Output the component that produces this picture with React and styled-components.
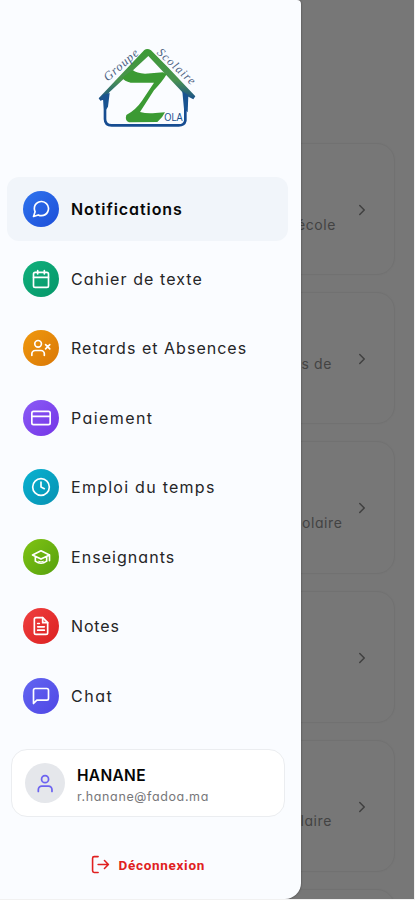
import React from 'react';
import styled, { createGlobalStyle } from 'styled-components';
import { ChevronRight } from 'lucide-react';
import {
  FiCalendar,
  FiClock,
  FiCreditCard,
  FiMessageCircle,
  FiMessageSquare,
} from 'react-icons/fi';

const GlobalStyle = createGlobalStyle`
  * {
    box-sizing: border-box;
  }

  body {
    background: #f1f1f1;
    font-family: Inter, 'Liberation Sans', sans-serif;
    font-feature-settings: 'cv11' 1;
    margin: 0;
    overflow: hidden;
  }
`;

const Screen = styled.div`
  background: #777;
  height: 899px;
  overflow: hidden;
  position: relative;
  width: 414px;
`;

const Feed = styled.main`
  display: flex;
  flex-direction: column;
  gap: 17px;
  padding: 143px 19.5px 0 20px;
`;

const FeedCard = styled.article`
  align-items: center;
  border: 1px solid #717171;
  border-radius: 18px;
  box-shadow: 0 0 2px rgba(0, 0, 0, 0.04);
  display: flex;
  flex: none;
  height: 132.2px;
  justify-content: flex-end;
  padding: 2px 22.5px 0 0;
`;

const FeedText = styled.span`
  color: #434343;
  font-size: 14px;
  letter-spacing: 0.6px;
  line-height: 20px;
  padding-top: ${({ $drop }) => $drop * 2}px;
  text-align: right;
  white-space: nowrap;
`;

const FeedChevron = styled(ChevronRight)`
  color: #404040;
  flex: none;
  height: 18px;
  margin-left: ${({ $gap }) => $gap}px;
  width: 18px;
`;

const Drawer = styled.aside`
  background: #fafcff;
  border-radius: 0 4px 16px 0;
  box-shadow: 0 0 2px rgba(0, 0, 0, 0.5);
  display: flex;
  flex-direction: column;
  height: 899px;
  left: 0;
  position: absolute;
  top: 0;
  width: 301px;
`;

const Logo = styled.svg`
  flex: none;
  height: 105px;
  margin: 35px 0 0 85px;
  width: 130px;
`;

const Menu = styled.nav`
  display: flex;
  flex-direction: column;
  gap: 5.5px;
  margin-top: 37px;
  padding: 0 13px 0 7px;
`;

const MenuItem = styled.a`
  align-items: center;
  background: ${({ $active }) => ($active ? '#f1f5fa' : 'transparent')};
  border-radius: 12px;
  display: flex;
  gap: 12px;
  height: 64px;
  padding-left: 16px;
`;

const MenuIcon = styled.span`
  align-items: center;
  background: ${({ $from, $to }) => `linear-gradient(135deg, ${$from}, ${$to})`};
  border-radius: 50%;
  color: #fff;
  display: flex;
  flex: none;
  height: 36px;
  justify-content: center;
  width: 36px;

  svg {
    height: 20px;
    width: 20px;
  }
`;

const MenuLabel = styled.span`
  color: ${({ $active }) => ($active ? '#080808' : '#252527')};
  font-size: 16px;
  font-weight: ${({ $active }) => ($active ? 600 : 400)};
  letter-spacing: ${({ $tracking }) => $tracking}px;
  white-space: nowrap;
`;

const Profile = styled.section`
  align-items: center;
  background: #fff;
  border: 1px solid #ebedf0;
  border-radius: 16px;
  display: flex;
  gap: 12px;
  height: 68px;
  margin: 21.5px 16px 0 11px;
  padding-left: 13px;
`;

const Avatar = styled.span`
  align-items: center;
  background: #e5e7eb;
  border-radius: 50%;
  color: #6c63f0;
  display: flex;
  height: 40px;
  justify-content: center;
  width: 40px;

  svg {
    height: 21px;
    width: 21px;
  }
`;

const ProfileText = styled.div`
  display: flex;
  flex-direction: column;
  padding-top: 4px;
`;

const ProfileName = styled.strong`
  color: #050505;
  font-size: 15.5px;
  font-weight: 600;
  letter-spacing: 0.3px;
  line-height: 22px;
`;

const ProfileMail = styled.span`
  color: #77777a;
  font-size: 12.5px;
  letter-spacing: 0.63px;
  line-height: 19px;
`;

const Logout = styled.button`
  align-items: center;
  background: none;
  border: 0;
  color: #e02020;
  display: flex;
  font-family: Roboto, sans-serif;
  font-size: 13.5px;
  font-weight: 700;
  gap: 9px;
  height: 24px;
  letter-spacing: 0.7px;
  margin-top: 35.5px;
  padding: 0 0 0 90.5px;

  svg {
    height: 19px;
    width: 19px;
  }
`;

const Stroke = ({ children }) => (
  <svg
    viewBox="0 0 24 24"
    fill="none"
    stroke="currentColor"
    strokeWidth="2"
    strokeLinecap="round"
    strokeLinejoin="round"
  >
    {children}
  </svg>
);

const PersonIcon = () => (
  <Stroke>
    <circle cx="11.5" cy="7" r="4" />
    <path d="M3.8 21v-2a4 4 0 0 1 4-4h7.6a4 4 0 0 1 4 4v2" />
  </Stroke>
);

const AbsenceIcon = () => (
  <Stroke>
    <circle cx="8.5" cy="7" r="4" />
    <path d="M1 21v-2a4 4 0 0 1 4-4h7a4 4 0 0 1 4 4v2M17.5 8l5 5m0-5-5 5" />
  </Stroke>
);

const NoteIcon = () => (
  <Stroke>
    <path d="M14 2H6a2 2 0 0 0-2 2v16a2 2 0 0 0 2 2h12a2 2 0 0 0 2-2V8z" />
    <path d="M14 2v6h6M8 9h2M8 13h8M8 17h8" />
  </Stroke>
);

const TeacherIcon = () => (
  <Stroke>
    <path d="M12 4.5 1.8 9.5 12 14.5 22.2 9.5zM5.2 11.5v5.5q6.8 5 13.6 0v-5.5M22.2 9.5v7" />
    <path d="M9 17.2q3 1.4 6 0" strokeWidth="1.2" />
  </Stroke>
);

const LogoutIcon = () => (
  <Stroke>
    <path d="M9 22H4a2 2 0 0 1-2-2V4a2 2 0 0 1 2-2h5M9 12h13M17 7l5 5-5 5" />
  </Stroke>
);

const SchoolLogo = () => (
  <Logo viewBox="0 0 390 315">
    <defs>
      <linearGradient id="roof" x1="0" y1="0" x2="0" y2="1">
        <stop offset="0" stopColor="#3c9a34" />
        <stop offset="0.6" stopColor="#4a9350" />
        <stop offset="1" stopColor="#174b8f" />
      </linearGradient>
      <path id="groupe" d="M68 140 L168 53" />
      <path id="scolaire" d="M214 55 L322 154" />
    </defs>
    <path
      d="M41 190 L178 45 Q187 39 198 46 L250 98 L331 184 L325 193 L300 180 L190 63 L73 172 L62 192 L46 197z"
      fill="url(#roof)"
    />
    <path
      d="M60 182 V252 Q60 271 80 271 H281 Q298 271 301 257 V178"
      fill="none"
      stroke="#164c91"
      strokeWidth="8"
    />
    <path d="M53 181 L74 174 L69 215 L58 232z" fill="#195391" />
    <path d="M292 169 L310 181 L308 232 L297 222z" fill="#195391" />
    <path
      d="M143 105 Q155 115 180 116 L234 112 L245 118 Q232 140 207 166 L165 231 Q187 237 211 234 L240 232 Q233 248 217 261 L132 262 Q119 257 124 240 Q154 223 171 197 L207 143 H137 Q118 138 111 128z"
      fill="#3b9a33"
    />
    <text
      fill="#4c6282"
      fontFamily="Liberation Serif, serif"
      fontSize="37"
      fontStyle="italic"
    >
      <textPath href="#groupe" textLength="126">Groupe</textPath>
    </text>
    <text
      fill="#4c6282"
      fontFamily="Liberation Serif, serif"
      fontSize="36"
      fontStyle="italic"
    >
      <textPath href="#scolaire" textLength="142">Scolaire</textPath>
    </text>
    <text
      x="238"
      y="257"
      fill="#20528e"
      fontFamily="Liberation Sans, sans-serif"
      fontSize="32"
      textLength="55"
      lengthAdjust="spacingAndGlyphs"
    >
      OLA
    </text>
  </Logo>
);

const feed = [
  { text: 'école', drop: 14.5, gap: 17 },
  { text: 's de', drop: 5, gap: 21 },
  { text: 'olaire', drop: 15, gap: 10.5 },
  { text: '', drop: 0, gap: 0 },
  { text: 'laire', drop: 14.5, gap: 21 },
  { text: '', drop: 0, gap: 0 },
];

const menu = [
  { label: 'Notifications', icon: FiMessageCircle, from: '#2f74ee', to: '#1d4ed8', tracking: 0.93 },
  { label: 'Cahier de texte', icon: FiCalendar, from: '#10b07c', to: '#059669', tracking: 1.07 },
  { label: 'Retards et Absences', icon: AbsenceIcon, from: '#f0990e', to: '#d97706', tracking: 1.02 },
  { label: 'Paiement', icon: FiCreditCard, from: '#8b5cf6', to: '#7434e6', tracking: 1.4 },
  { label: 'Emploi du temps', icon: FiClock, from: '#08b2d1', to: '#0891b2', tracking: 1.26 },
  { label: 'Enseignants', icon: TeacherIcon, from: '#80c414', to: '#55a00d', tracking: 1.05 },
  { label: 'Notes', icon: NoteIcon, from: '#ef4040', to: '#dc2020', tracking: 0.85 },
  { label: 'Chat', icon: FiMessageSquare, from: '#6366f1', to: '#4f46e5', tracking: 1.5 },
];

const App = () => (
  <>
    <GlobalStyle />

    <Screen>
      <Feed>
        {feed.map(({ text, drop, gap }, index) => (
          <FeedCard key={index}>
            <FeedText $drop={drop}>{text}</FeedText>
            <FeedChevron $gap={gap} />
          </FeedCard>
        ))}
      </Feed>

      <Drawer>
        <SchoolLogo />

        <Menu>
          {menu.map(({ label, icon: Icon, from, to, tracking }, index) => (
            <MenuItem key={label} $active={index === 0}>
              <MenuIcon $from={from} $to={to}>
                <Icon />
              </MenuIcon>
              <MenuLabel $active={index === 0} $tracking={tracking}>{label}</MenuLabel>
            </MenuItem>
          ))}
        </Menu>

        <Profile>
          <Avatar>
            <PersonIcon />
          </Avatar>
          <ProfileText>
            <ProfileName>HANANE</ProfileName>
            <ProfileMail>r.hanane@fadoa.ma</ProfileMail>
          </ProfileText>
        </Profile>

        <Logout>
          <LogoutIcon />
          Déconnexion
        </Logout>
      </Drawer>
    </Screen>
  </>
);

export default App;
